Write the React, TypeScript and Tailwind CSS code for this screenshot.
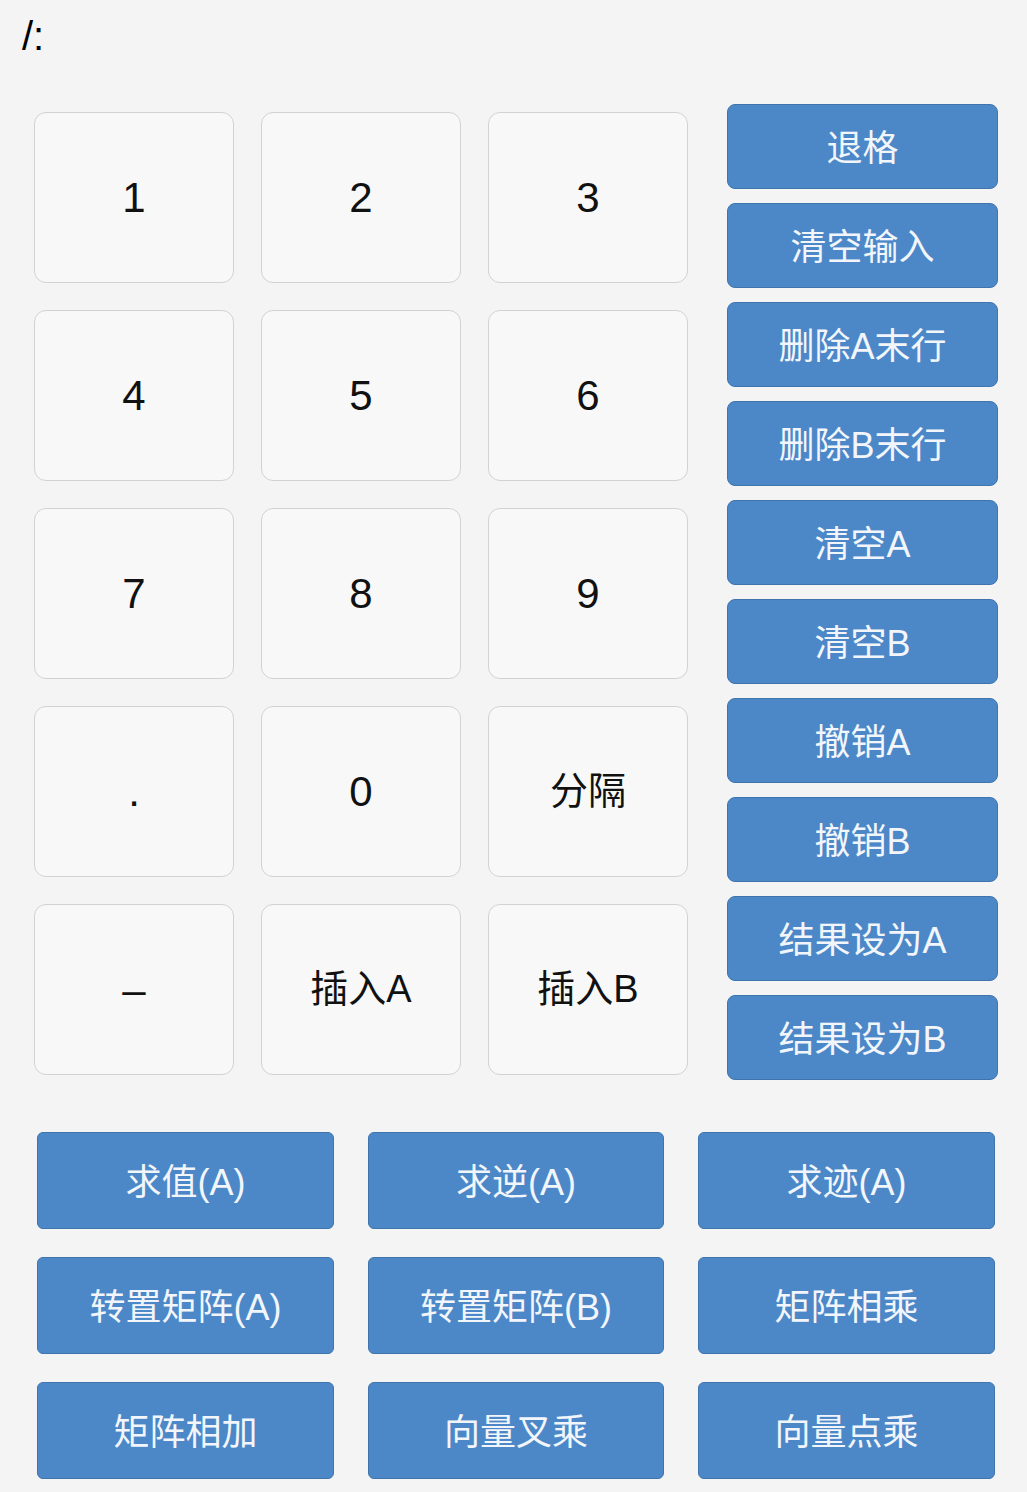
const keys = ["1", "2", "3", "4", "5", "6", "7", "8", "9", ".", "0", "分隔", "–", "插入A", "插入B"];

const sideButtons = [
  "退格",
  "清空输入",
  "删除A末行",
  "删除B末行",
  "清空A",
  "清空B",
  "撤销A",
  "撤销B",
  "结果设为A",
  "结果设为B",
];

const actions = [
  "求值(A)",
  "求逆(A)",
  "求迹(A)",
  "转置矩阵(A)",
  "转置矩阵(B)",
  "矩阵相乘",
  "矩阵相加",
  "向量叉乘",
  "向量点乘",
];

const font = "font-['Liberation_Sans','Noto_Sans_CJK_SC',sans-serif]";

export default function App() {
  return (
    <div className={`w-[1027px] h-[1492px] overflow-hidden bg-[#f4f4f4] ${font}`}>
      {/* display */}
      <div className="h-[104px] pl-[22px] pt-[10px] text-[40px] leading-[52px] text-black">
        /:
      </div>

      <div className="flex items-start">
        {/* keypad */}
        <div className="ml-[34px] mt-[8px] grid w-[654px] grid-cols-3 auto-rows-[171px] gap-[27px]">
          {keys.map((k) => (
            <button
              key={k}
              className="flex items-center justify-center rounded-[12px] border border-[#d2d2d2] bg-[#f8f8f8] text-[42px] text-[#111]"
            >
              <span className={/[\u4e00-\u9fff]/.test(k) ? "text-[38px]" : ""}>{k}</span>
            </button>
          ))}
        </div>

        {/* side column */}
        <div className="ml-[39px] flex w-[271px] flex-col gap-[14px]">
          {sideButtons.map((b) => (
            <button
              key={b}
              className="flex h-[85px] items-center justify-center rounded-[8px] border border-[#3f74ad] bg-[#4c88c8] pt-[4px] text-[36px] text-[#f2f6fb]"
            >
              {b}
            </button>
          ))}
        </div>
      </div>

      {/* operations */}
      <div className="ml-[37px] mt-[52px] grid grid-cols-[297px_296px_297px] auto-rows-[97px] gap-x-[34px] gap-y-[28px]">
        {actions.map((a) => (
          <button
            key={a}
            className="flex items-center justify-center rounded-[6px] border border-[#3f74ad] bg-[#4c88c8] pt-[4px] text-[36px] text-[#f2f6fb]"
          >
            {a}
          </button>
        ))}
      </div>
    </div>
  );
}
